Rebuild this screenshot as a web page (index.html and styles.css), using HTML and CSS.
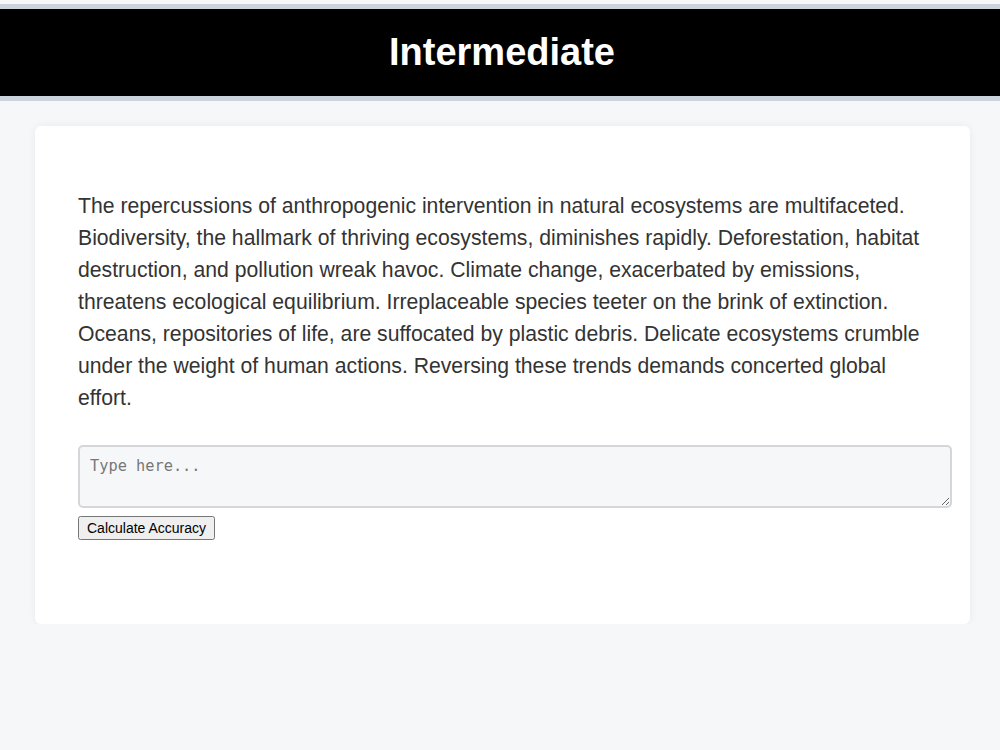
FILE: index.html
```html
<!DOCTYPE html>
<html lang="en">
<head>
    <meta charset="UTF-8">
    <title>Typing Test - Intermediate</title>
    <link rel="stylesheet" href="styles.css">
</head>
<body>
    <header class="header">
        <h1>Intermediate</h1>
    </header>
    <div class="container">
        <p class="passage">The repercussions of anthropogenic intervention in natural ecosystems are multifaceted. Biodiversity, the hallmark of thriving ecosystems, diminishes rapidly. Deforestation, habitat destruction, and pollution wreak havoc. Climate change, exacerbated by emissions, threatens ecological equilibrium. Irreplaceable species teeter on the brink of extinction. Oceans, repositories of life, are suffocated by plastic debris. Delicate ecosystems crumble under the weight of human actions. Reversing these trends demands concerted global effort.</p>
        <textarea id="typed" class="typing-box" placeholder="Type here..."></textarea>
        <button id="calc" class="calc-btn">Calculate Accuracy</button>
    </div>
</body>
</html>
```
FILE: styles.css
```css
* { margin: 0; padding: 0; }
body {
    background: #f6f7f9;
    font-family: "Liberation Sans", Arial, sans-serif;
    padding-top: 4px;
}
.header {
    background: #000;
    border-top: 5px solid #cbd3dd;
    border-bottom: 5px solid #cbd3dd;
    height: 87px;
    display: flex;
    justify-content: center;
    align-items: center;
}
.header h1 {
    color: #fff;
    font-size: 38px;
    font-weight: bold;
    margin-left: 4px;
}
.container {
    background: #fff;
    width: 850px;
    margin: 25px 0 0 35px;
    padding: 64px 42px 84px 43px;
    border-radius: 6px;
    box-shadow: 0 0 8px rgba(0, 0, 0, 0.06);
}
.passage {
    color: #333;
    font-size: 21.2px;
    line-height: 32px;
    margin-bottom: 31px;
}
.typing-box {
    display: block;
    width: 100%;
    height: 39px;
    padding: 10px;
    border: 2px solid #d4d6d9;
    border-radius: 5px;
    background: #f6f7f9;
    font-family: "DejaVu Sans Mono", monospace;
    font-size: 15.3px;
    color: #333;
    margin-bottom: 8px;
}
.typing-box::placeholder {
    color: #777;
}
.calc-btn {
    font-family: "Liberation Sans", Arial, sans-serif;
    font-size: 14px;
    padding: 2px 7px;
}
```
